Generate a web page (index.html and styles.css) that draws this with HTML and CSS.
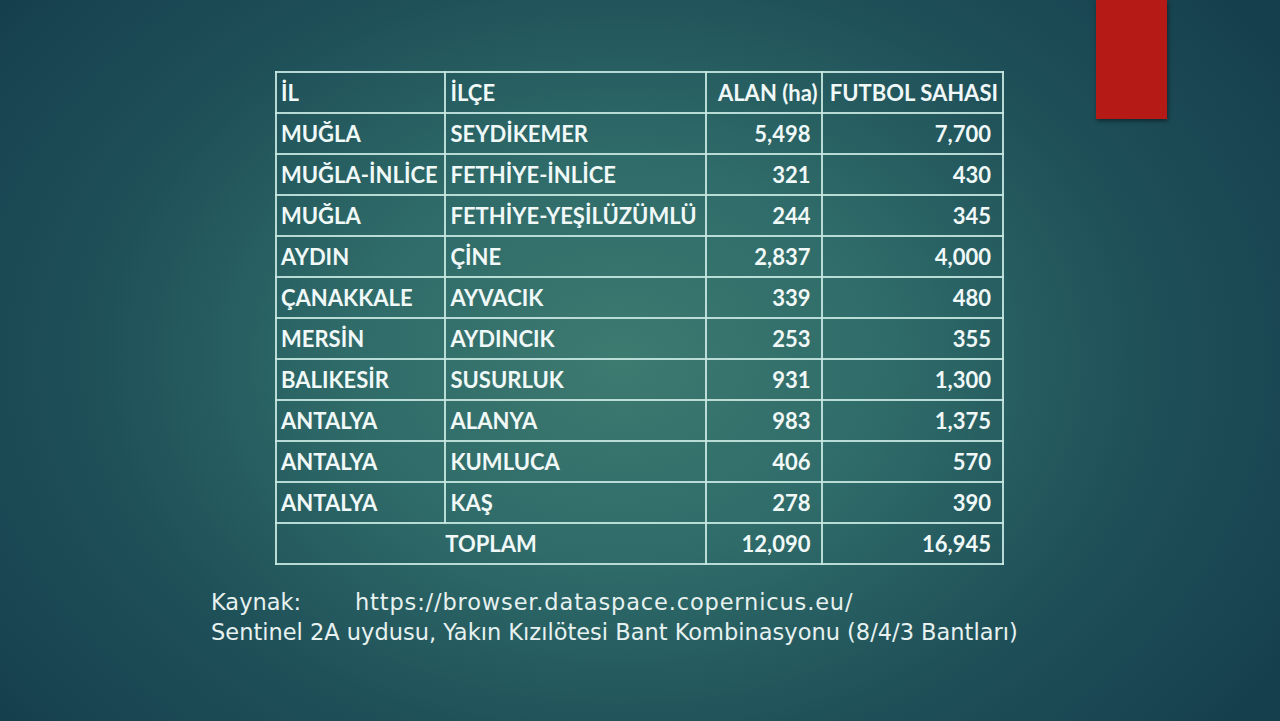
FILE: index.html
```html
<!DOCTYPE html>
<html lang="tr">
<head>
<meta charset="utf-8">
<link rel="stylesheet" href="styles.css">
</head>
<body>
<div class="slide">
  <div class="accent"></div>
  <table class="data">
    <thead>
      <tr><th class="c1">İL</th><th class="c2">İLÇE</th><th class="c3">ALAN (ha)</th><th class="c4">FUTBOL SAHASI</th></tr>
    </thead>
    <tbody>
      <tr><td>MUĞLA</td><td>SEYDİKEMER</td><td class="num">5,498</td><td class="num">7,700</td></tr>
      <tr><td>MUĞLA-İNLİCE</td><td>FETHİYE-İNLİCE</td><td class="num">321</td><td class="num">430</td></tr>
      <tr><td>MUĞLA</td><td>FETHİYE-YEŞİLÜZÜMLÜ</td><td class="num">244</td><td class="num">345</td></tr>
      <tr><td>AYDIN</td><td>ÇİNE</td><td class="num">2,837</td><td class="num">4,000</td></tr>
      <tr><td>ÇANAKKALE</td><td>AYVACIK</td><td class="num">339</td><td class="num">480</td></tr>
      <tr><td>MERSİN</td><td>AYDINCIK</td><td class="num">253</td><td class="num">355</td></tr>
      <tr><td>BALIKESİR</td><td>SUSURLUK</td><td class="num">931</td><td class="num">1,300</td></tr>
      <tr><td>ANTALYA</td><td>ALANYA</td><td class="num">983</td><td class="num">1,375</td></tr>
      <tr><td>ANTALYA</td><td>KUMLUCA</td><td class="num">406</td><td class="num">570</td></tr>
      <tr><td>ANTALYA</td><td>KAŞ</td><td class="num">278</td><td class="num">390</td></tr>
      <tr><td colspan="2" class="total">TOPLAM</td><td class="num">12,090</td><td class="num">16,945</td></tr>
    </tbody>
  </table>
  <div class="source">
    <p class="url"><span class="label">Kaynak:</span>https://browser.dataspace.copernicus.eu/</p>
    <p>Sentinel 2A uydusu, Yakın Kızılötesi Bant Kombinasyonu (8/4/3 Bantları)</p>
  </div>
</div>
</body>
</html>
```
FILE: styles.css
```css
html, body {
  margin: 0;
  padding: 0;
}
body {
  width: 1280px;
  height: 721px;
  overflow: hidden;
  background: radial-gradient(ellipse 780px 580px at 620px 360px, #3d7a70 0%, #2f6b69 35%, #1f5159 66%, #163f4e 100%);
  font-family: "Lato", "Open Sans", sans-serif;
  color: #f0f8f8;
}
.slide {
  position: relative;
  width: 1280px;
  height: 721px;
  padding: 71px 0 0 275px;
  box-sizing: border-box;
}
.accent {
  position: absolute;
  left: 1096px;
  top: 0;
  width: 71px;
  height: 119px;
  background: #b61a16;
  box-shadow: 1px 2px 4px rgba(0, 0, 0, 0.45);
}
.data {
  border-collapse: collapse;
  width: 729px;
  table-layout: fixed;
  font-weight: 700;
  font-size: 22px;
}
.data th, .data td {
  border: 2px solid rgba(200, 232, 226, 0.9);
  height: 39px;
  padding: 0 4px;
  text-align: left;
  white-space: nowrap;
  line-height: 24px;
}
.c1 { width: 159px; }
.c2 { width: 250px; }
.c3 { width: 110px; }
.c4 { width: 174px; }
.data th.c3, .data th.c4 { text-align: right; padding: 0 4px 0 0; }
.data td.num { text-align: right; padding-right: 11px; }
.data td.total { text-align: center; padding: 0; }
.source {
  margin: 22px 0 0 -64px;
  font-family: "DejaVu Sans", sans-serif;
  font-weight: 400;
  font-size: 22.5px;
  color: #e6f1f0;
  line-height: 30px;
}
.source p { margin: 0; white-space: nowrap; }
.url { letter-spacing: 0.85px; }
.label {
  display: inline-block;
  width: 144px;
  letter-spacing: 0;
}
```
